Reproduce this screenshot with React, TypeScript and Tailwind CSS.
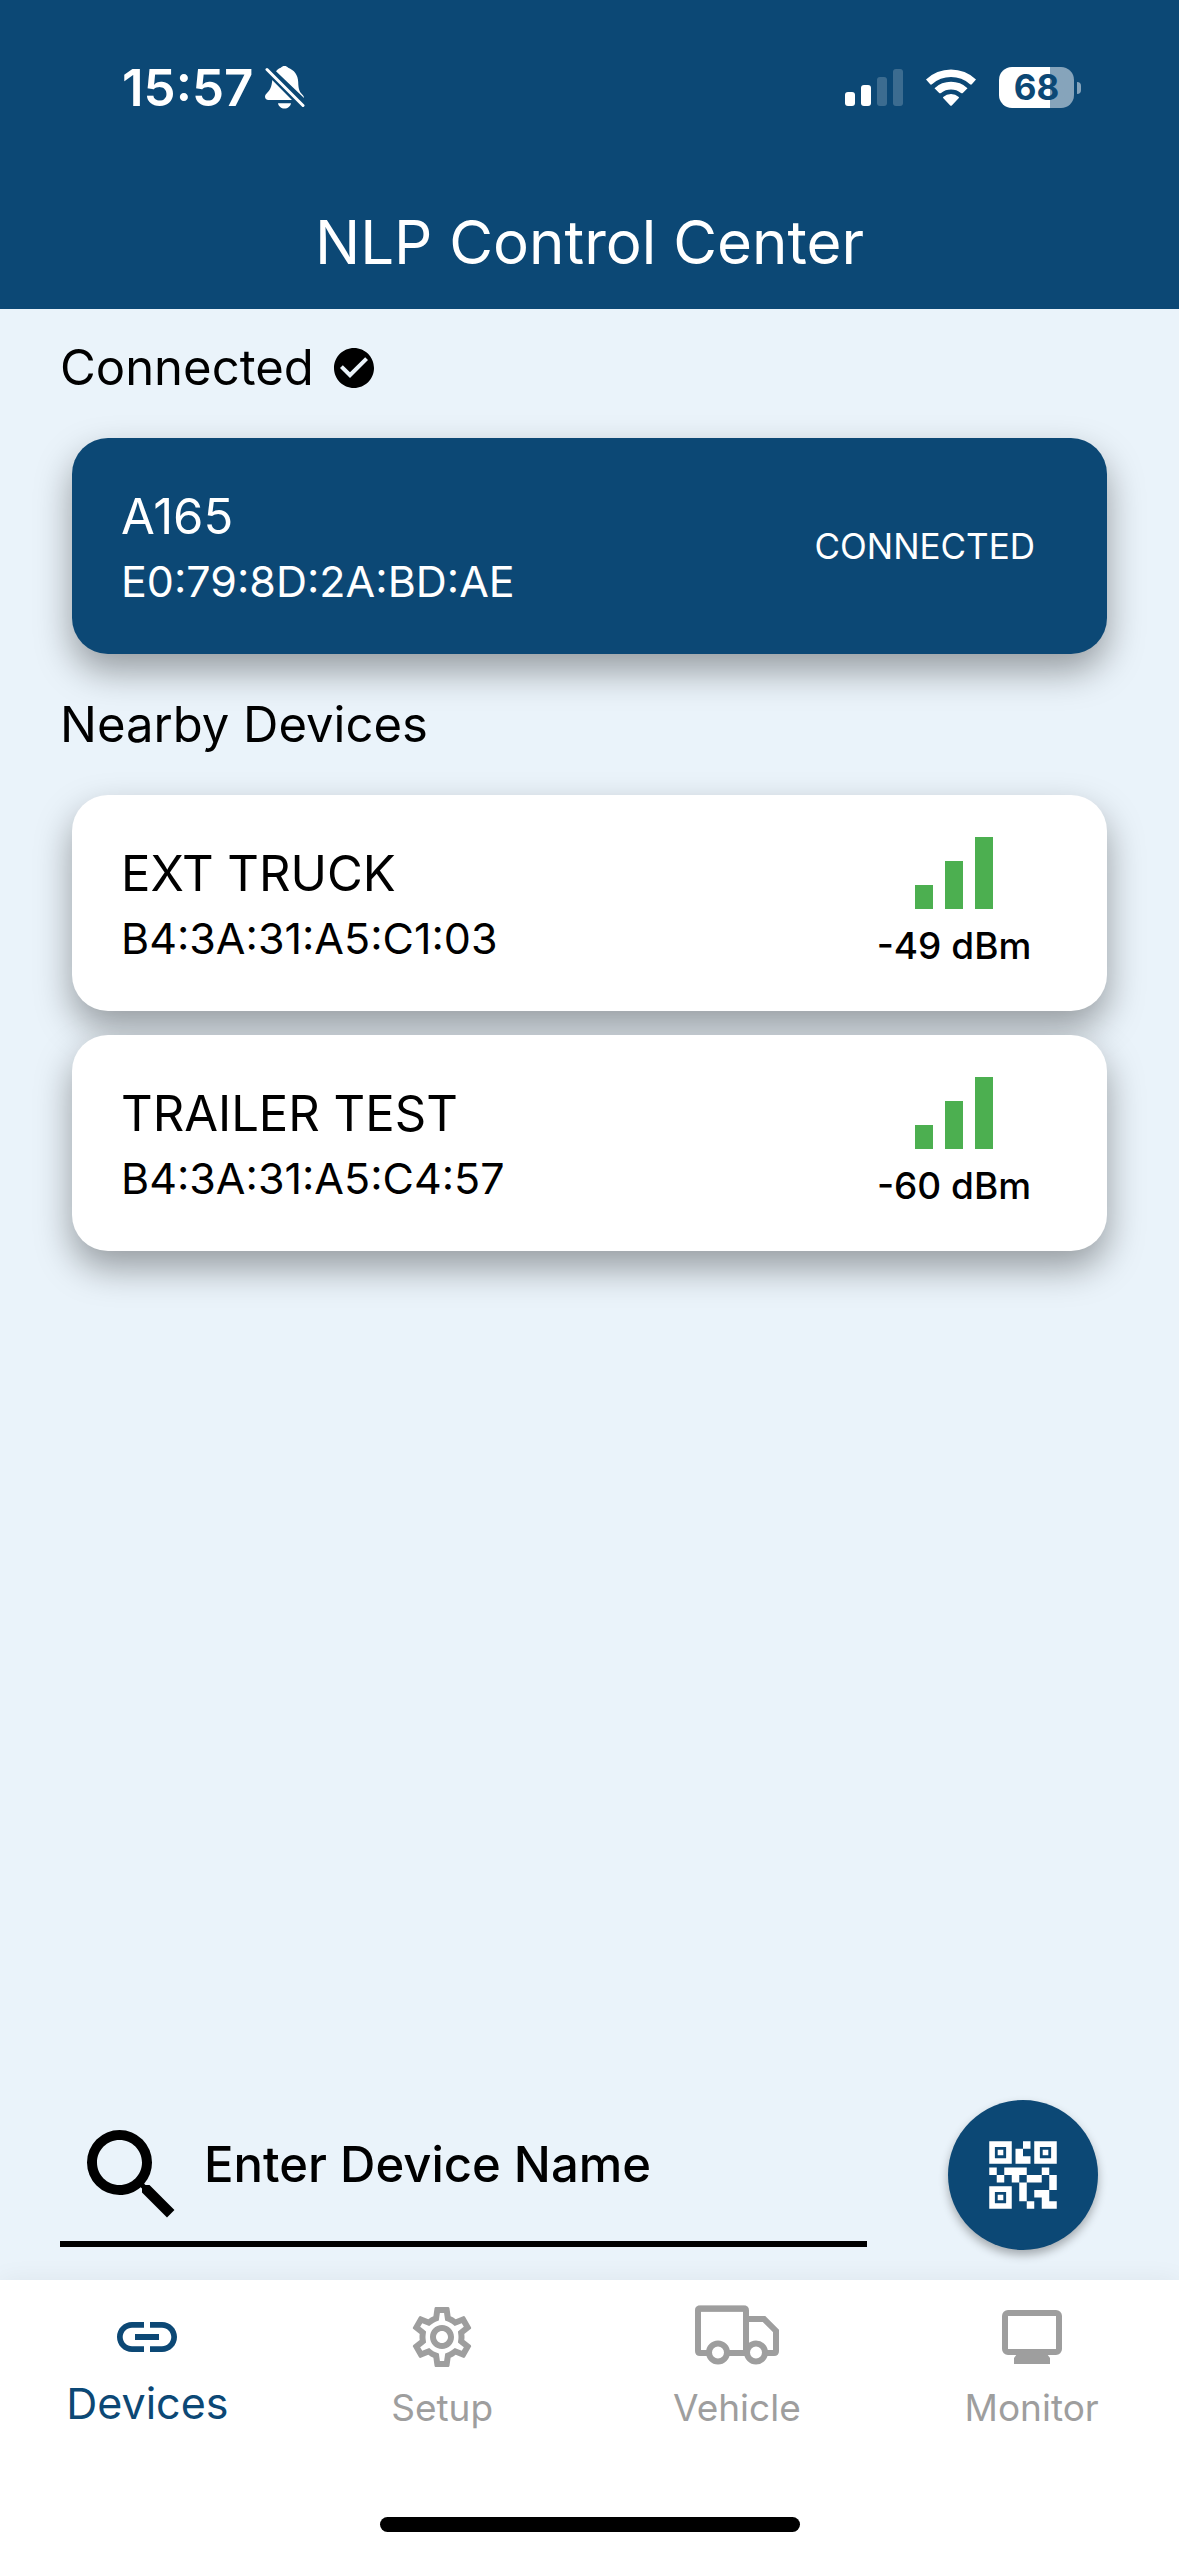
import { useState } from "react";
import type { ReactNode } from "react";
import { MdCheckCircle, MdLink, MdOutlineSettings, MdQrCode2, MdSearch } from "react-icons/md";

type Device = { name: string; mac: string; rssi?: number };

const connected: Device = { name: "A165", mac: "E0:79:8D:2A:BD:AE" };
const nearby: Device[] = [
  { name: "EXT TRUCK", mac: "B4:3A:31:A5:C1:03", rssi: -49 },
  { name: "TRAILER TEST", mac: "B4:3A:31:A5:C4:57", rssi: -60 },
];

function BellOff() {
  return (
    <svg viewBox="0 0 40 43" className="h-[43px] w-10" aria-label="Silent mode">
      <path
        fill="#fff"
        d="M11 5.200C12.500 3.300 14 2.300 15.800 1.800 16.800.5 18 0 19.500 0s2.700.5 3.700 1.800C29 4 33 9 33.200 16c.2 6.500 1 9.500 4 12.500 1 1 1.800 2 1.800 3.500L11 5.200ZM7.300 14 27 34H3.500C1.300 34 0 32.700 0 30.800c0-1.500.8-2.500 2-3.800C5.500 23.500 6.500 21 7.300 14ZM13 37.200h13c-.6 3.200-3.200 5.300-6.500 5.300S13.600 40.400 13 37.200Z"
      />
      <path stroke="#0c4875" strokeWidth="7" d="M2 3.500 38 39.500" />
      <path stroke="#fff" strokeWidth="3" strokeLinecap="round" d="M2 3.500 38 39.500" />
    </svg>
  );
}

function StatusIcons() {
  return (
    <div className="flex items-center gap-[22px]">
      <svg viewBox="0 0 58 37" className="h-[37px] w-[58px]" fill="#fff" aria-label="Cellular signal">
        <rect x="0" y="23" width="10" height="14" rx="3" />
        <rect x="16" y="16" width="10" height="21" rx="3" />
        <rect x="32" y="8" width="10" height="29" rx="3" opacity=".2" />
        <rect x="48" y="0" width="10" height="37" rx="3" opacity=".2" />
      </svg>
      <svg viewBox="0 0 52 37" className="h-[37px] w-[52px]" fill="#fff" aria-label="Wi-Fi">
        <path d="M1 10.500A36 36 0 0 1 51 10.500L46.800 15.300Q46 16 45 15.200A28.500 28.500 0 0 0 7 15.200Q6 16 5.200 15.300Z" />
        <path d="M9.500 19.200A24 24 0 0 1 42.500 19.200L37.800 24Q37 24.700 36 24A16.500 16.500 0 0 0 16 24Q15 24.700 14.200 24Z" />
        <path d="M18.200 28A12 12 0 0 1 33.800 28Q34.200 28.700 33.600 29.300L26.800 36.500Q26 37.200 25.200 36.500L18.400 29.300Q17.800 28.700 18.200 28Z" />
      </svg>
      <div className="flex items-center gap-[3px]">
        <div className="flex h-[41px] w-[75px] items-center justify-center rounded-[13px] bg-linear-to-r from-white from-68% to-[#86a4bb] to-68% text-[35px] leading-none font-bold text-[#0c4875]">
          68
        </div>
        <div className="h-3 w-1 rounded-r-full bg-[#86a4bb]" />
      </div>
    </div>
  );
}

function SignalBars() {
  return (
    <span className="flex h-[72px] items-end gap-3" aria-hidden="true">
      <span className="h-6 w-[18px] bg-[#4caf50]" />
      <span className="h-12 w-[18px] bg-[#4caf50]" />
      <span className="h-[72px] w-[18px] bg-[#4caf50]" />
    </span>
  );
}

function DeviceCard({ device }: { device: Device }) {
  const active = device.rssi === undefined;
  return (
    <button
      type="button"
      className={
        "flex h-[216px] w-full items-center justify-between rounded-[36px] pr-[72px] pl-[49px] text-left shadow-[0_17px_36px_rgba(0,0,0,0.36)] " +
        (active ? "bg-[#0c4875] text-white" : "bg-white text-black")
      }
    >
      <span className="flex flex-col pt-[6px]">
        <span className="text-[49px] leading-[65px]">{device.name}</span>
        <span className="text-[43px] leading-[65px]">{device.mac}</span>
      </span>
      {active ? (
        <span className="text-[35px] leading-[48px]">CONNECTED</span>
      ) : (
        <span className="flex min-w-[162px] flex-col items-center gap-[13px]">
          <SignalBars />
          <span className="text-[37px] leading-[48px] font-medium">{device.rssi} dBm</span>
        </span>
      )}
    </button>
  );
}

function TruckIcon() {
  return (
    <svg viewBox="0 0 84 64" className="h-[64px] w-[84px]" fill="none" stroke="currentColor" strokeWidth="6" aria-hidden="true">
      <path strokeLinejoin="round" d="M13 48H5Q3 48 3 46V5Q3 3.500 5 3.500H49Q51 3.500 51 5.500V48H34" />
      <path d="M3 3.800H51" />
      <path d="M53 14H69L81 26V46Q81 48 79 48H72" />
      <circle cx="23" cy="47.500" r="9" />
      <circle cx="61" cy="47.500" r="9" />
    </svg>
  );
}

function MonitorIcon() {
  return (
    <svg viewBox="0 0 60 54" className="h-[54px] w-[60px]" aria-hidden="true">
      <rect x="3" y="3" width="54" height="39" rx="3" fill="none" stroke="currentColor" strokeWidth="6" />
      <path fill="currentColor" d="M15 44H45L48 48V54H12V48Z" />
    </svg>
  );
}

const tabs: { label: string; icon: ReactNode }[] = [
  { label: "Devices", icon: <MdLink size={72} /> },
  { label: "Setup", icon: <MdOutlineSettings size={72} /> },
  { label: "Vehicle", icon: <TruckIcon /> },
  { label: "Monitor", icon: <MonitorIcon /> },
];

export default function App() {
  const [tab, setTab] = useState("Devices");
  const [query, setQuery] = useState("");
  return (
    <div className="flex min-h-screen flex-col bg-[#eaf3fa] font-['Inter',sans-serif] text-black">
      <header className="bg-[#0c4875] text-white">
        <div className="flex h-[175px] items-center justify-between pr-[98px] pl-[122px]">
          <div className="flex items-center gap-3">
            <span className="text-[51px] leading-[60px] font-semibold">15:57</span>
            <BellOff />
          </div>
          <StatusIcons />
        </div>
        <h1 className="flex h-[134px] items-center justify-center text-[60px] leading-none">NLP Control Center</h1>
      </header>

      <main className="flex flex-1 flex-col">
        <h2 className="flex h-[117px] items-center gap-4 px-[60px] text-[49px] leading-none">
          Connected <MdCheckCircle size={48} />
        </h2>
        <div className="mt-3 px-[72px]">
          <DeviceCard device={connected} />
        </div>
        <h2 className="mt-3 flex h-[117px] items-center px-[60px] text-[49px] leading-none">Nearby Devices</h2>
        <ul className="mt-3 flex flex-col gap-6 px-[72px]">
          {nearby.map((d) => (
            <li key={d.mac}>
              <DeviceCard device={d} />
            </li>
          ))}
        </ul>

        <div className="mt-auto flex items-end justify-between gap-[81px] pr-[81px] pb-[30px] pl-[60px]">
          <label className="mb-[3px] flex min-w-0 flex-1 items-center gap-3 border-b-6 border-black pb-[6px] pl-3">
            <MdSearch size={120} className="shrink-0" aria-hidden="true" />
            <input
              type="text"
              aria-label="Device name"
              value={query}
              onChange={(e) => setQuery(e.target.value)}
              placeholder="Enter Device Name"
              className="mb-5 min-w-0 flex-1 bg-transparent text-[49px] leading-[60px] font-medium outline-none placeholder:text-black"
            />
          </label>
          <button
            type="button"
            aria-label="Scan QR code"
            className="flex size-[150px] shrink-0 items-center justify-center rounded-full bg-[#0c4875] text-white shadow-[0_5px_10px_rgba(0,0,0,0.3)]"
          >
            <MdQrCode2 size={90} />
          </button>
        </div>
      </main>

      <nav className="bg-white shadow-[0_0_24px_rgba(0,0,0,0.06)]">
        <div className="grid h-[237px] grid-cols-4 items-start pt-[21px]">
          {tabs.map((t) => (
            <button
              key={t.label}
              type="button"
              onClick={() => setTab(t.label)}
              className={"flex flex-col items-center gap-1 " + (t.label === tab ? "text-[#0c4875]" : "text-[#9e9e9e]")}
            >
              <span className="flex h-[72px] items-center">{t.icon}</span>
              <span className={"flex h-[52px] items-center leading-none " + (t.label === tab ? "text-[43px]" : "pt-2 text-[37px]")}>
                {t.label}
              </span>
            </button>
          ))}
        </div>
        <div className="mx-auto mb-6 h-[15px] w-[420px] rounded-full bg-black" />
      </nav>
    </div>
  );
}
